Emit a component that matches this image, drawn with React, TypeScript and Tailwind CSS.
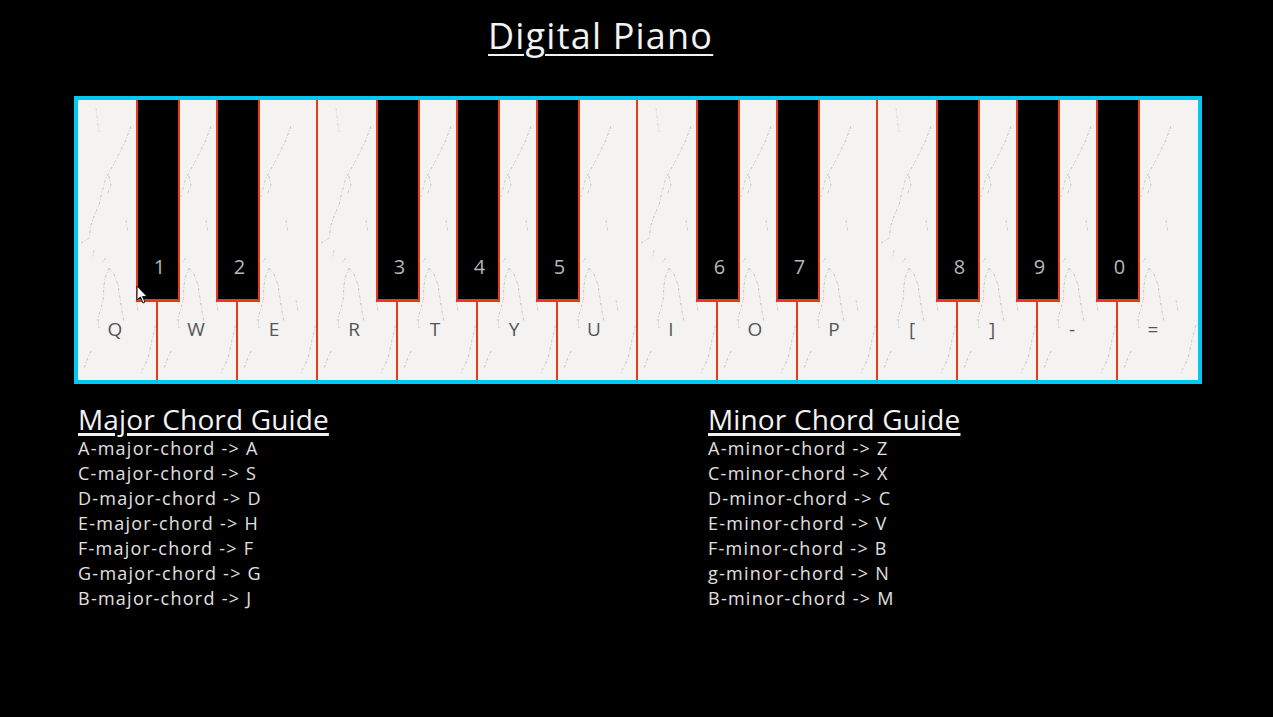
const whites: [string, number][] = [["Q",37],["W",38],["E",36],["R",36],["T",37],["Y",36],["U",36],["I",33],["O",37],["P",36],["[",34],["]",34],["-",34],["=",35]];
const blacks: [string, number][] = [["1",59],["2",139],["3",299],["4",379],["5",459],["6",619],["7",699],["8",859],["9",939],["0",1019]];
const major = [["A-major-chord -> ","A"],["C-major-chord -> ","S"],["D-major-chord -> ","D"],["E-major-chord -> ","H"],["F-major-chord -> ","F"],["G-major-chord -> ","G"],["B-major-chord -> ","J"]];
const minor = [["A-minor-chord -> ","Z"],["C-minor-chord -> ","X"],["D-minor-chord -> ","C"],["E-minor-chord -> ","V"],["F-minor-chord -> ","B"],["g-minor-chord -> ","N"],["B-minor-chord -> ","M"]];

function Texture() {
  return (
    <svg className="absolute left-0 top-0 h-[280px] w-[80px]" viewBox="0 0 80 280" fill="none" stroke="#77746f" strokeWidth="0.7" strokeDasharray="3 1.5 1 2" strokeOpacity="0.5">
      <path d="M53 26 L47 42 L38 60 L28 78 L24 92 L21 105 L16 116 L13 125 L11 138 L3 143" />
      <path d="M31 76 L33 86 L29 94" />
      <path d="M31 168 L27 178 L26 185 L25 201 L20 218 L21 228" />
      <path d="M31 168 L36 174 L40 185 L43 205 L46 222" />
      <path d="M28 158 L24 163" />
      <path d="M78 225 L74 240 L70 258 L63 273" />
      <path d="M13 251 L9 260 L6 268" />
      <path d="M18 8 L21 32" strokeOpacity="0.3" />
      <path d="M48 120 L50 132 M58 200 L60 212 M16 150 L15 158" strokeOpacity="0.4" />
    </svg>
  );
}

function Guide({ title, rows }: { title: string; rows: string[][] }) {
  return (
    <div className="w-[630px] shrink-0">
      <h2 className="-mt-px mb-px h-[32px] text-[28px] leading-[32px] tracking-[0.15px] text-[#f2f2f2] underline decoration-[3px] underline-offset-[3px]">{title}</h2>
      {rows.map(([a, b]) => (
        <p key={a} className="h-[25px] whitespace-pre text-[18px] leading-[25px] tracking-[1.25px] text-[#e0e0e0]">{a}{b}</p>
      ))}
    </div>
  );
}

export default function App() {
  return (
    <div className="flex h-[717px] w-[1273px] flex-col overflow-hidden bg-black font-['Open_Sans',sans-serif]">
      <h1 className="ml-[488px] mt-[12px] h-[84px] text-[36px] leading-[48px] tracking-[1.2px] text-[#f2f2f2] underline decoration-2 underline-offset-[5px]">Digital Piano</h1>
      <div className="relative ml-[74px] flex h-[288px] w-[1128px] border-4 border-[#00c8f0]">
        {whites.map(([k, c], i) => (
          <div key={k} className={`relative h-full w-[80px] shrink-0 bg-[#f4f3f2] ${i < 13 ? "border-r-2 border-[#e8391a]" : ""}`}>
            <Texture />
            <span className="absolute top-[216px] flex w-0 justify-center text-[19px] leading-[26px] text-[#565656]" style={{ left: c }}>{k}</span>
          </div>
        ))}
        {blacks.map(([k, x]) => (
          <div key={k} className="absolute top-0 flex h-[202px] w-[44px] items-end justify-center border-x-2 border-b-[3px] border-[#e8391a] bg-black pb-[19px] pl-[3px] text-[20px] leading-[26px] text-[#b8b8b8]" style={{ left: x - 1 }}>{k}</div>
        ))}
        <svg className="absolute left-[58px] top-[185px] z-10 h-[20px] w-[14px]" viewBox="0 0 14 20">
          <path d="M1 1 L1 15 L4.5 12 L7 18 L9 17 L6.5 11.5 L11 11.5 Z" fill="#fff" stroke="#111" strokeWidth="1" />
        </svg>
      </div>
      <div className="ml-[78px] mt-[20px] flex">
        <Guide title="Major Chord Guide" rows={major} />
        <Guide title="Minor Chord Guide" rows={minor} />
      </div>
    </div>
  );
}
